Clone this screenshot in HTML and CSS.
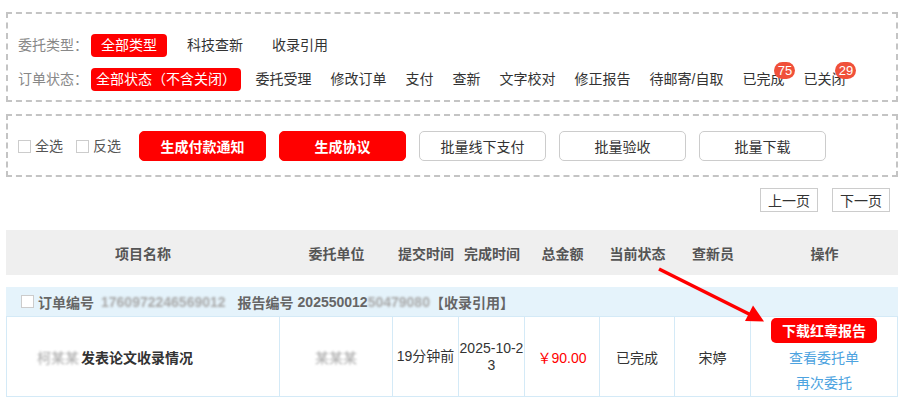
FILE: index.html
```html
<!DOCTYPE html>
<html lang="zh-CN">
<head>
<meta charset="utf-8">
<title>订单列表</title>
<link rel="stylesheet" href="styles.css">
</head>
<body>
<div class="page">
  <div class="filter">
    <div class="frow">
      <span class="flabel">委托类型：</span>
      <span class="fbtn fbtn-type">全部类型</span>
      <span class="fitem wide first">科技查新</span>
      <span class="fitem wide">收录引用</span>
    </div>
    <div class="frow">
      <span class="flabel">订单状态：</span>
      <span class="fbtn fbtn-status">全部状态（不含关闭）</span>
      <span class="fitem first">委托受理</span>
      <span class="fitem">修改订单</span>
      <span class="fitem">支付</span>
      <span class="fitem">查新</span>
      <span class="fitem">文字校对</span>
      <span class="fitem">修正报告</span>
      <span class="fitem">待邮寄/自取</span>
      <span class="fitem">已完成<span class="badge">75</span></span>
      <span class="fitem">已关闭<span class="badge">29</span></span>
    </div>
  </div>

  <div class="actions">
    <label class="chk"><span class="box"></span>全选</label>
    <label class="chk chk2"><span class="box"></span>反选</label>
    <div class="abtns">
      <button class="abtn red">生成付款通知</button>
      <button class="abtn red">生成协议</button>
      <button class="abtn">批量线下支付</button>
      <button class="abtn">批量验收</button>
      <button class="abtn">批量下载</button>
    </div>
  </div>

  <div class="pager">
    <button class="pbtn">上一页</button>
    <button class="pbtn">下一页</button>
  </div>

  <div class="thead">
    <div>项目名称</div>
    <div>委托单位</div>
    <div>提交时间</div>
    <div>完成时间</div>
    <div>总金额</div>
    <div>当前状态</div>
    <div>查新员</div>
    <div>操作</div>
  </div>

  <div class="order">
    <span class="box"></span>
    <span class="olabel">订单编号</span>
    <span class="blur onum">1760972246569012</span>
    <span class="olabel rlabel">报告编号</span>
    <span class="rnum">202550012</span><span class="blur">50479080</span>
    <span class="otype">【收录引用】</span>
  </div>

  <div class="trow">
    <div class="cell cname"><span class="blur pblur">柯某某</span><span class="pname">发表论文收录情况</span></div>
    <div class="cell"><span class="blur">某某某</span></div>
    <div class="cell ctime">19分钟前</div>
    <div class="cell ctime">2025-10-23</div>
    <div class="cell price">￥90.00</div>
    <div class="cell">已完成</div>
    <div class="cell">宋婷</div>
    <div class="cell ops">
      <button class="dl">下载红章报告</button>
      <a class="link">查看委托单</a>
      <a class="link">再次委托</a>
    </div>
  </div>
</div>

<svg class="arrow" width="905" height="401" viewBox="0 0 905 401">
  <line x1="659" y1="269" x2="751" y2="315" stroke="#ff0000" stroke-width="3.5"/>
  <polygon points="764,321.5 745,321 753,305.5" fill="#ff0000"/>
</svg>
</body>
</html>
```

FILE: styles.css
```css
* { box-sizing: border-box; }

html, body { background: #fff; }

body {
  margin: 0;
  font-family: "Liberation Sans", "Noto Sans CJK SC", sans-serif;
  font-size: 14px;
  color: #333;
}

.page {
  padding: 12px 7px 0 6px;
}

/* ---------- filter box ---------- */
.filter {
  border: 2px dashed #c4c4c4;
  padding: 20px 10px 9px;
}

.frow {
  display: flex;
  align-items: center;
  height: 23px;
}

.frow + .frow { margin-top: 11px; }

.flabel {
  width: 73px;
  color: #888;
  line-height: 23px;
}

.fbtn {
  background: #ff0000;
  color: #fff;
  border-radius: 4px;
  height: 23px;
  line-height: 23px;
  text-align: center;
}

.fbtn-type { width: 76px; }
.fbtn-status { width: 150px; }

.fitem {
  position: relative;
  padding: 0 9.5px;
  line-height: 23px;
  color: #333;
}

.fitem.wide { padding: 0 14.5px; }
.fitem.first { margin-left: 5px; }
.fitem.wide.first { margin-left: 5.5px; }

.badge {
  position: absolute;
  left: 41.5px;
  top: -6px;
  min-width: 21px;
  height: 17px;
  padding: 0 3px;
  border-radius: 9px;
  background: #f0503a;
  color: #fff;
  font-size: 13px;
  line-height: 17px;
  text-align: center;
}

/* ---------- actions box ---------- */
.actions {
  margin-top: 12px;
  border: 2px dashed #c4c4c4;
  padding: 15px 10px 14px;
  display: flex;
  align-items: center;
}

.chk {
  display: flex;
  align-items: center;
  color: #555;
  line-height: 30px;
}

.chk2 { margin-left: 13px; }

.box {
  display: inline-block;
  width: 13px;
  height: 13px;
  border: 1px solid #ccc;
  background: #fff;
  margin-right: 4px;
  flex: none;
}

.abtns {
  display: flex;
  gap: 13px;
  margin-left: 18px;
}

.abtn {
  width: 127px;
  height: 30px;
  padding: 0;
  border: 1px solid #ccc;
  border-radius: 5px;
  background: #fff;
  color: #333;
  font: inherit;
}

.abtn.red {
  background: #ff0000;
  border-color: #ff0000;
  color: #fff;
  font-weight: bold;
}

/* ---------- pager ---------- */
.pager {
  display: flex;
  justify-content: flex-end;
  gap: 14px;
  margin-top: 11px;
  padding-right: 8px;
}

.pbtn {
  width: 58px;
  height: 24px;
  padding: 0;
  border: 1px solid #ccc;
  background: #fff;
  color: #333;
  font: inherit;
}

/* ---------- table ---------- */
.thead {
  display: grid;
  grid-template-columns: 274px 113px 66px 66px 75px 75px 76px 147px;
  height: 45px;
  margin-top: 18px;
  background: #efefef;
  align-items: center;
  text-align: center;
  font-weight: bold;
  color: #555;
}

.order {
  display: flex;
  align-items: center;
  height: 29px;
  margin-top: 12px;
  padding-left: 15px;
  background: #e5f3fb;
  font-weight: bold;
  color: #666;
}

.order .box { margin-right: 4px; }

.onum { margin-left: 7px; }
.rlabel { margin-left: 12px; }
.rnum { margin-left: 4px; }

.blur {
  filter: blur(1.3px);
  color: #a8a8a8;
}

.trow {
  display: grid;
  grid-template-columns: 273px 113px 66px 66px 75px 75px 76px 146px;
  border: 1px solid #d4eaf7;
}

.cell {
  display: flex;
  align-items: center;
  justify-content: center;
  text-align: center;
  min-height: 79px;
  border-right: 1px solid #d4eaf7;
  color: #333;
}

.cell:last-child { border-right: none; }

.cname {
  justify-content: flex-start;
  padding-left: 30px;
}

.pblur { margin-right: 2px; }

.pname {
  font-weight: bold;
  color: #333;
}

.ctime {
  padding: 0;
  word-break: break-all;
  line-height: 17px;
}

.price { color: #ff0000; }

.ops {
  flex-direction: column;
}

.dl {
  width: 106px;
  height: 25px;
  padding: 0;
  margin-bottom: 3px;
  border: none;
  border-radius: 5px;
  background: #ff0000;
  color: #fff;
  font: inherit;
  font-weight: bold;
}

.link {
  display: block;
  line-height: 25px;
  color: #4da3e0;
}

/* annotation arrow drawn over the page */
.arrow {
  position: absolute;
  left: 0;
  top: 0;
  pointer-events: none;
}
```
